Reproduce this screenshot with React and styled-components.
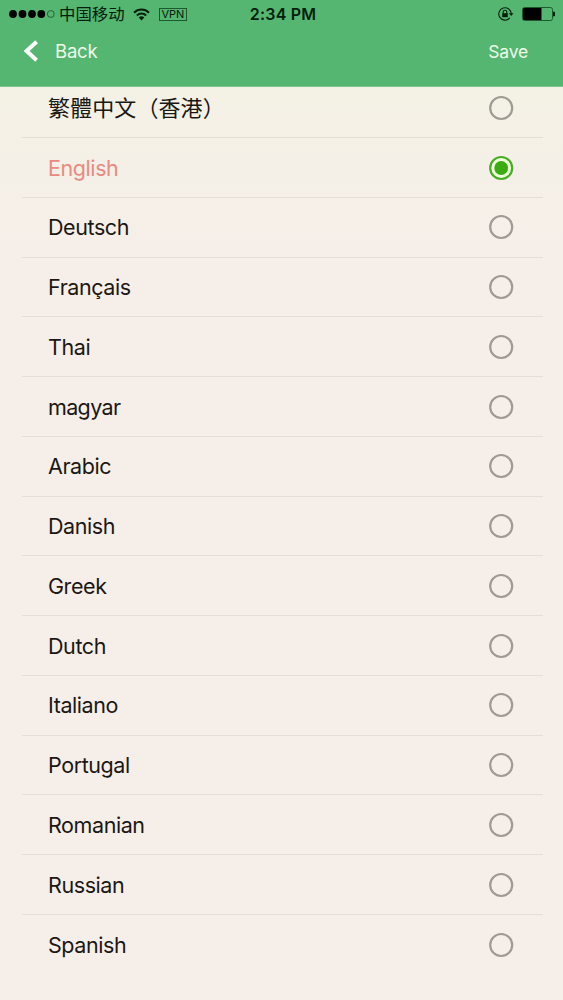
import React, { useState } from 'react';
import styled, { createGlobalStyle } from 'styled-components';


const GlobalStyle = createGlobalStyle`
    body {
        margin: 0;
        background-color: #f6efe9;
        font-family: Inter, 'Noto Sans CJK SC', sans-serif;
    }
`

const Screen = styled.div`
    display: flex;
    flex-direction: column;
    width: 563px;
    height: 1000px;
    overflow: hidden;
    background-color: #f6efe9;
`

const Header = styled.header`
    flex: none;
    height: 87px;
    box-sizing: border-box;
    border-bottom: 1px solid #7cc48b;
    background-color: #55b671;
`

const StatusBar = styled.div`
    display: grid;
    grid-template-columns: 1fr auto 1fr;
    align-items: center;
    height: 28px;
    padding: 0 8px 0 9px;
    color: #06200c;
`

const StatusGroup = styled.div`
    display: flex;
    align-items: center;
    gap: ${props => props.$gap || '0'};
    justify-content: ${props => props.$end ? 'flex-end' : 'flex-start'};
`

const Carrier = styled.span`
    margin: 0 8px 0 4px;
    font-family: 'Noto Sans CJK SC', sans-serif;
    font-size: 16.4px;
    line-height: 26px;
    height: 28px;
`

const Vpn = styled.span`
    height: 13px;
    margin-left: 9px;
    padding: 0 2px;
    box-sizing: border-box;
    border: 1px solid #1c5a2e;
    font-size: 11px;
    line-height: 11px;
    letter-spacing: -0.1px;
`

const Clock = styled.span`
    padding-left: 2px;
    font-size: 16px;
    font-weight: 600;
    letter-spacing: 0.2px;
`

const NavBar = styled.nav`
    display: flex;
    align-items: center;
    justify-content: space-between;
    height: 46px;
    padding: 0 35px 0 23px;
`

const NavButton = styled.button`
    display: flex;
    align-items: center;
    gap: 16px;
    padding: 0;
    border: none;
    background: none;
    color: #eefbe9;
    font-family: inherit;
    font-size: ${props => props.$size};
    letter-spacing: -0.2px;
`

const Viewport = styled.main`
    flex: 1;
    min-height: 0;
    overflow: hidden;
    background: linear-gradient(#f4f1e5, #f6efe9 170px);
`

const LanguageList = styled.ul`
    margin: -8.8px 20px 0 22px;
    padding: 0;
    list-style: none;
`

const LanguageRow = styled.li`
    display: flex;
    align-items: center;
    justify-content: space-between;
    height: 59.78px;
    box-sizing: border-box;
    padding: 0.4px 29px 0 26px;
    border-bottom: 1px solid #e3dfd7;
    color: ${props => props.$selected ? '#e98a80' : '#1b1713'};

    &:last-child {
        border-bottom-color: transparent;
    }
`

const Label = styled.span`
    font-size: ${props => props.$size || '21.5px'};
    line-height: 30px;
    letter-spacing: ${props => props.$spacing || '-0.42px'};
`

const RadioIcon = styled.svg`
    width: 26px;
    height: 26px;
    fill: ${props => props.$selected ? '#efffdc' : 'none'};
    stroke: ${props => props.$selected ? '#49ac27' : '#9f9b94'};
    stroke-width: 2.2;
`

const languages = [
    { name: '繁體中文（香港）', size: '22px', spacing: '0.1px' },
    { name: 'English' },
    { name: 'Deutsch' },
    { name: 'Français' },
    { name: 'Thai' },
    { name: 'magyar', spacing: '-0.65px' },
    { name: 'Arabic' },
    { name: 'Danish' },
    { name: 'Greek' },
    { name: 'Dutch' },
    { name: 'Italiano' },
    { name: 'Portugal' },
    { name: 'Romanian' },
    { name: 'Russian' },
    { name: 'Spanish' },
];

function Radio({ selected }) {
    return (
        <RadioIcon viewBox="0 0 26 26" $selected={selected}>
            <circle cx="13.2" cy="13" r="11" />
            {selected && <circle cx="13.2" cy="13" r="6.9" fill="#3aac10" stroke="none" />}
        </RadioIcon>
    )
}

function Signal() {
    return (
        <svg width="46" height="10" viewBox="0 0 46 10">
            {[4, 13.5, 23, 32.3].map(x => <circle key={x} cx={x} cy="5" r="3.9" fill="#000" />)}
            <circle cx="41.8" cy="5" r="3.4" fill="none" stroke="#1c5a2e" strokeWidth="0.9" />
        </svg>
    )
}

function Wifi() {
    return (
        <svg width="17" height="13" viewBox="0 0 17 13" fill="none" stroke="#06200c" strokeWidth="2">
            <path d="M1 4.7a10.6 10.6 0 0 1 15 0" />
            <path d="M3.8 7.5a6.7 6.7 0 0 1 9.4 0" />
            <path d="M8.5 12.4L5.7 9.5a4 4 0 0 1 5.6 0z" fill="#06200c" stroke="none" />
        </svg>
    )
}

function RotationLock() {
    return (
        <svg width="16" height="14" viewBox="0 0 16 14" fill="none" stroke="#06200c">
            <path d="M11.8 10.9A6.2 6.2 0 1 1 13.2 7" strokeWidth="1.1" />
            <path d="M10.9 6.2h4.6l-2.3 2.8z" fill="#06200c" stroke="none" />
            <rect x="4.2" y="6.2" width="5.6" height="4" fill="#06200c" stroke="none" />
            <path d="M5.2 6.4V5a1.8 1.8 0 0 1 3.6 0v1.4" strokeWidth="1.1" />
        </svg>
    )
}

function Battery() {
    return (
        <svg width="33" height="14" viewBox="0 0 33 14">
            <rect x="0.5" y="0.5" width="30" height="13" rx="2" fill="none" stroke="#1c5a2e" />
            <path d="M2 1h17.5v12H2a1 1 0 0 1-1-1V2a1 1 0 0 1 1-1z" fill="#000" />
            <path d="M31 4.5a2.5 2.5 0 0 1 0 5z" fill="#06200c" />
        </svg>
    )
}

function BackArrow() {
    return (
        <svg width="16" height="22" viewBox="0 0 16 22" fill="none" stroke="#fff" strokeWidth="4">
            <path d="M13.6 1.8L3.6 11l10 9.2" />
        </svg>
    )
}

export default function App()
{
    const [selected, setSelected] = useState('English');

    return (
        <Screen>
            <GlobalStyle />
            <Header>
                <StatusBar>
                    <StatusGroup>
                        <Signal />
                        <Carrier>中国移动</Carrier>
                        <Wifi />
                        <Vpn>VPN</Vpn>
                    </StatusGroup>
                    <Clock>2:34 PM</Clock>
                    <StatusGroup $end $gap="8px">
                        <RotationLock />
                        <Battery />
                    </StatusGroup>
                </StatusBar>
                <NavBar>
                    <NavButton $size="18.5px"><BackArrow />Back</NavButton>
                    <NavButton $size="17.5px">Save</NavButton>
                </NavBar>
            </Header>
            <Viewport>
                <LanguageList>
                    {languages.map(({ name, size, spacing }) => (
                        <LanguageRow key={name} $selected={name === selected} onClick={() => setSelected(name)}>
                            <Label $size={size} $spacing={spacing}>{name}</Label>
                            <Radio selected={name === selected} />
                        </LanguageRow>
                    ))}
                </LanguageList>
            </Viewport>
        </Screen>
    )
}
